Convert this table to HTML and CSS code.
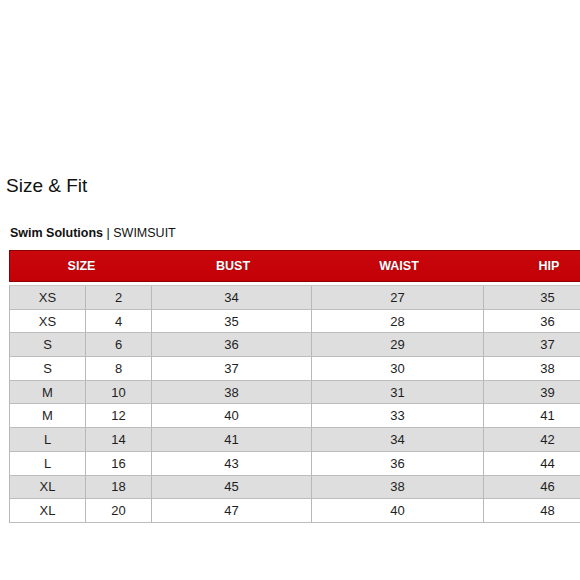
FILE: index.html
```html
<!DOCTYPE html>
<html>
<head>
<meta charset="utf-8">
<link rel="stylesheet" href="styles.css">
</head>
<body>
<h1 class="title">Size &amp; Fit</h1>
<p class="brand"><b>Swim Solutions</b> | SWIMSUIT</p>
<div class="viewport">
<div class="chart">
  <div class="head">
    <div>SIZE</div><div>BUST</div><div>WAIST</div><div>HIP</div>
  </div>
  <div class="rows">
    <div class="row"><div>XS</div><div>2</div><div>34</div><div>27</div><div>35</div></div>
    <div class="row"><div>XS</div><div>4</div><div>35</div><div>28</div><div>36</div></div>
    <div class="row"><div>S</div><div>6</div><div>36</div><div>29</div><div>37</div></div>
    <div class="row"><div>S</div><div>8</div><div>37</div><div>30</div><div>38</div></div>
    <div class="row"><div>M</div><div>10</div><div>38</div><div>31</div><div>39</div></div>
    <div class="row"><div>M</div><div>12</div><div>40</div><div>33</div><div>41</div></div>
    <div class="row"><div>L</div><div>14</div><div>41</div><div>34</div><div>42</div></div>
    <div class="row"><div>L</div><div>16</div><div>43</div><div>36</div><div>44</div></div>
    <div class="row"><div>XL</div><div>18</div><div>45</div><div>38</div><div>46</div></div>
    <div class="row"><div>XL</div><div>20</div><div>47</div><div>40</div><div>48</div></div>
  </div>
</div>
</div>
</body>
</html>
```
FILE: styles.css
```css
html, body {
  margin: 0;
  padding: 0;
  overflow: hidden;
  background: #fff;
}
body {
  font-family: "Liberation Sans", Arial, sans-serif;
  color: #222;
  width: 580px;
  height: 580px;
}
.title {
  margin: 175px 0 0 6px;
  font-size: 19px;
  line-height: 22px;
  font-weight: normal;
  color: #111;
}
.brand {
  margin: 29px 0 0 10px;
  font-size: 12.5px;
  line-height: 15px;
  color: #111;
}
.brand b {
  font-weight: bold;
}
.viewport {
  margin: 9px 0 0 9px;
  width: 571px;
  overflow: hidden;
}
.chart {
  width: 603px;
}
.head {
  display: grid;
  grid-template-columns: 143px 160px 172px 128px;
  height: 32px;
  box-sizing: border-box;
  background: linear-gradient(#c9080e, #c20006);
  border: 1px solid #8c0000;
  color: #fff;
  font-weight: bold;
  font-size: 12.5px;
  align-items: center;
  text-align: center;
  text-shadow: 0 0 1px rgba(80, 0, 0, 0.6);
}
.rows {
  margin-top: 3px;
  border-top: 1px solid #c8c8c8;
  border-left: 1px solid #b8b8b8;
}
.row {
  display: grid;
  grid-template-columns: 76px 66px 160px 172px 128px;
  height: 23.7px;
  box-sizing: border-box;
  border-bottom: 1px solid #bdbdbd;
  font-size: 13px;
  text-align: center;
  color: #1e1e1e;
}
.row:nth-child(odd) {
  background: #dedede;
}
.row:nth-child(even) {
  background: #fff;
}
.row > div {
  display: flex;
  align-items: center;
  justify-content: center;
  border-right: 1px solid #b8b8b8;
  box-sizing: border-box;
}
```
